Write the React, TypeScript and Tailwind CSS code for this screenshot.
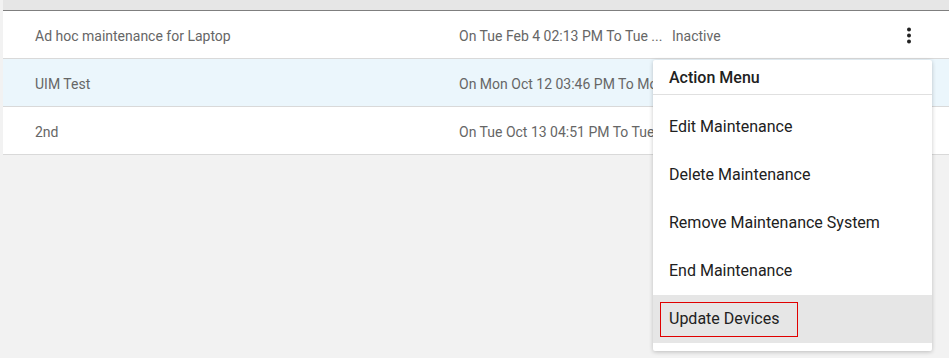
import React from 'react';

const rows = [
  { name: 'Ad hoc maintenance for Laptop', when: 'On Tue Feb 4 02:13 PM To Tue ...', status: 'Inactive', active: false },
  { name: 'UIM Test', when: 'On Mon Oct 12 03:46 PM To Mon Oct 12 05:46 PM', status: 'Inactive', active: true },
  { name: '2nd', when: 'On Tue Oct 13 04:51 PM To Tue Oct 13 06:51 PM', status: 'Inactive', active: false },
];

const menuItems = ['Edit Maintenance', 'Delete Maintenance', 'Remove Maintenance System', 'End Maintenance'];

function Kebab() {
  return (
    <svg width="6" height="18" viewBox="0 0 6 18" className="text-[#222]">
      <circle cx="3" cy="2.5" r="2" fill="currentColor" />
      <circle cx="3" cy="8.5" r="2" fill="currentColor" />
      <circle cx="3" cy="14.5" r="2" fill="currentColor" />
    </svg>
  );
}

export default function App() {
  return (
    <div className="relative w-[949px] h-[358px] overflow-hidden bg-[#f2f2f2] pl-[3px] font-['Roboto',sans-serif]">
      {/* Table */}
      <div className="w-full">
        <div className="h-[11px] bg-[#e6e6e6] border-b border-[#7f7f7f]" />
        {rows.map((r, i) => (
          <div
            key={i}
            className={`grid grid-cols-[30px_212px_212px_211px_214px_1fr] h-[48px] border-b border-[#d9d9d9] text-[14px] text-[#666] ${r.active ? 'bg-[#ebf6fc]' : 'bg-white'}`}
          >
            <div />
            <div className="flex items-center pl-[2px] pt-[4px]">{r.name}</div>
            <div />
            <div className="flex items-center pl-[2px] pr-[2px] pt-[4px] overflow-hidden whitespace-nowrap">{r.when}</div>
            <div className="flex items-center pl-[4px] pt-[4px]">{i === 0 ? r.status : ''}</div>
            <div className="flex items-center pl-[24px] pt-[2px]">{i === 0 && <Kebab />}</div>
          </div>
        ))}
      </div>

      {/* Action menu */}
      <div className="absolute left-[653px] top-[60px] w-[279px] bg-white rounded-[2px] shadow-[0_1px_4px_rgba(0,0,0,0.22)] pb-[8px]">
        <div className="h-[35px] flex items-center px-[16px] pt-[1px] border-b border-[#e0e0e0] text-[16px] font-medium text-[#212121]">
          Action Menu
        </div>
        <div className="pt-[8px]">
          {menuItems.map((m) => (
            <div key={m} className="h-[48px] flex items-center px-[16px] text-[16px] text-[#212121]">
              {m}
            </div>
          ))}
          <div className="h-[48px] bg-[#e6e6e6] px-[7px] py-[7px] flex items-center">
            <span className="h-[35px] w-[138px] flex items-center px-[8px] border border-[#e00000] text-[16px] text-[#212121]">
              Update Devices
            </span>
          </div>
        </div>
      </div>
    </div>
  );
}
